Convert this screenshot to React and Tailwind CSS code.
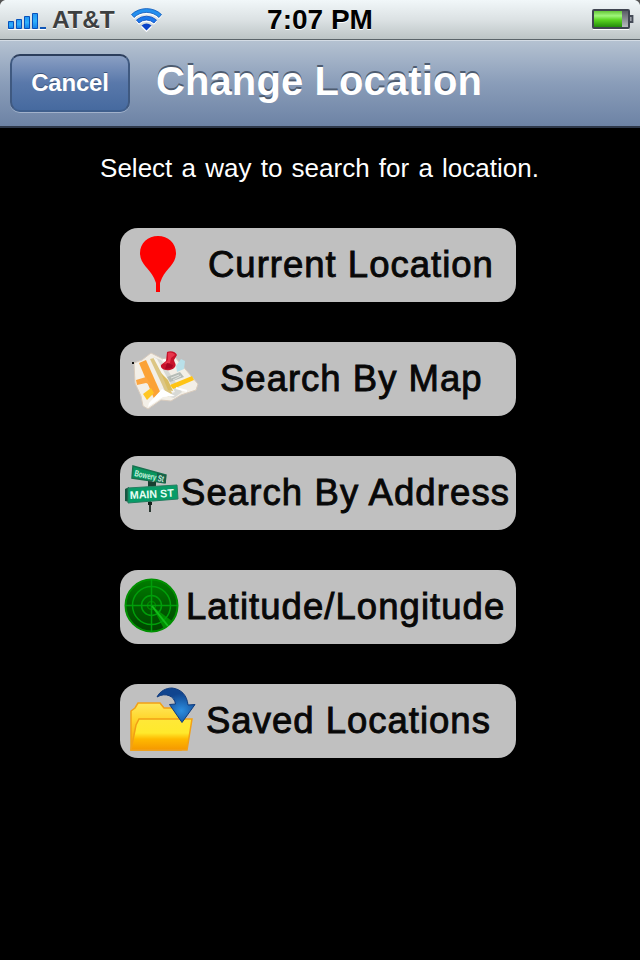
const options = [
  { label: "Current Location", Icon: PinIcon, text: "pl-[88px] tracking-[1px]" },
  { label: "Search By Map", Icon: MapIcon, text: "pl-[100px] tracking-[1px]" },
  { label: "Search By Address", Icon: SignIcon, text: "pl-[61px] tracking-[1.1px]" },
  { label: "Latitude/Longitude", Icon: RadarIcon, text: "pl-[66px] tracking-[1.05px]" },
  { label: "Saved Locations", Icon: FolderIcon, text: "pl-[86px] tracking-[1px]" },
];

function PinIcon() {
  return (
    <svg width="100" height="74" viewBox="0 0 100 74">
      <path
        d="M38 8c10 0 18 7 18 17 0 11-9 15-14 25l-2 5v9h-4v-9l-2-5C29 40 20 36 20 25 20 15 28 8 38 8z"
        fill="#fe0000"
      />
    </svg>
  );
}

function MapIcon() {
  return (
    <svg width="100" height="74" viewBox="0 0 100 74">
      <path
        d="M14 21l8-3 9-7 12 6 11-3 24 28-2 6-15 5-10 6-10-1-13 9-5-3-2-10-6-13z"
        fill="#f3efe7"
        stroke="#d8cbbd"
      />
      <path d="M33 15l8 3 21 32-8 6-8-2z" fill="#d8d9d5" />
      <path d="M19 21l7-3 16 36-7 5z" fill="#fba235" />
      <path d="M16 38l10-3 5 8-5-2-9 2z" fill="#fda640" />
      <path d="M23 52l8-6 3 5-7 7z" fill="#ffc623" />
      <path d="M30 17l4-1 19 34-5 5z" fill="#dcc684" />
      <path d="M33 15l4 2 18 33-3 1z" fill="#f7f5ef" />
      <path d="M41 31l7 7 5 11-5-1z" fill="#d9bc61" />
      <path d="M50 43l22-9 2 4-21 9z" fill="#ffc414" />
      <path d="M47 35l13-5 4 5-14 5z" fill="#b6bcb6" />
      <path d="M51 36l8-3M53 38l8-4" stroke="#e3e4e0" />
      <path d="M56 24l5-7 4 2-1 8-7 3z" fill="#b9e0e9" />
      <path d="M29 61l13-14 13 7-12 1-15 10z" fill="#fff" />
      <path d="M56 46l11 3M43 18l12 2" stroke="#fff" strokeWidth="2" />
      <path d="M47 10c4-2 9 0 10 3l-3 5 1 3c2 3-1 6-5 7-6 1-10-2-9-5l5-4z" fill="#c8132b" />
      <path d="M48 11c3-1 6 0 7 2l-4 3-1 5-6 1 4-4z" fill="#e8354b" />
      <path d="M47 21l6 2-1 3-7 1z" fill="#a80521" />
      <path d="M12 20h2v2h-2z" fill="#111" />
    </svg>
  );
}

function SignIcon() {
  return (
    <svg width="100" height="74" viewBox="0 0 100 74">
      <path d="M29 44h2v12h-2z" fill="#29352f" />
      <path d="M28 46h4v3h-4z" fill="#17211c" />
      <path d="M13 10l33 9-1 8-33-5z" fill="#07955e" stroke="#17724f" strokeWidth="1.5" />
      <path d="M37 17l9 2v8l-9-1z" fill="#185f49" />
      <text
        x="14"
        y="20"
        transform="rotate(12 14 20)"
        className="font-['Liberation_Sans'] text-[9px] font-bold"
        textLength="30"
        lengthAdjust="spacingAndGlyphs"
        fill="#c5f0df"
      >
        Bowery St
      </text>
      <path d="M28 25l8 1v4l-8 1z" fill="#183e31" />
      <path d="M5 33l4-2v15l-4-1z" fill="#185541" />
      <path d="M8 32l49-3 1 14-50 4z" fill="#079c68" stroke="#257e60" />
      <text
        x="10"
        y="43"
        transform="rotate(-3 10 43)"
        className="font-['Liberation_Sans'] text-[11px] font-bold"
        textLength="44"
        lengthAdjust="spacingAndGlyphs"
        fill="#e8fff5"
      >
        MAIN ST
      </text>
    </svg>
  );
}

function RadarIcon() {
  return (
    <svg width="100" height="74" viewBox="0 0 100 74">
      <defs>
        <linearGradient id="radar" x2="0" y2="1">
          <stop stopColor="#007d00" />
          <stop offset=".5" stopColor="#005c00" />
          <stop offset="1" stopColor="#004600" />
        </linearGradient>
      </defs>
      <circle cx="31.5" cy="35.5" r="26" fill="url(#radar)" stroke="#009000" strokeWidth="2" />
      <path d="M32 36l20 15-8 8z" fill="#008e00" />
      <g fill="none" stroke="#009e0a" strokeWidth="1.5">
        <circle cx="31.5" cy="35.5" r="19" />
        <circle cx="31.5" cy="35.5" r="10" />
        <circle cx="31.5" cy="35.5" r="4" stroke="#008800" />
        <path d="M31.5 9v53M5 35.5h53" />
      </g>
      <path d="M32 36l16 20" stroke="#13bd19" strokeWidth="2" />
    </svg>
  );
}

function FolderIcon() {
  return (
    <svg width="100" height="74" viewBox="0 0 100 74">
      <defs>
        <linearGradient id="folderBack" x2="0" y2="1">
          <stop stopColor="#ffe95c" />
          <stop offset=".35" stopColor="#ffd52b" />
          <stop offset="1" stopColor="#f59b00" />
        </linearGradient>
        <linearGradient id="folderFront" x2="0" y2="1">
          <stop stopColor="#ffe838" />
          <stop offset=".45" stopColor="#ffe92c" />
          <stop offset=".65" stopColor="#ffb900" />
          <stop offset="1" stopColor="#f59800" />
        </linearGradient>
        <radialGradient id="arrow" cx=".64" cy=".66" r=".5">
          <stop stopColor="#2c8ee0" />
          <stop offset="1" stopColor="#10458f" />
        </radialGradient>
      </defs>
      <path
        d="M11 66V27l4-3 3-5h22l4 5h13l4 7v35z"
        fill="url(#folderBack)"
        stroke="#f2a016"
        strokeWidth="1.5"
      />
      <path
        d="M11 66l5-25 3-6h53l-5 31z"
        fill="url(#folderFront)"
        stroke="#f2a016"
        strokeWidth="1.5"
      />
      <path
        d="M37 13C40 7 46 4 52 4c9 1 15 7 16 17l7-.5L62 38.500 49.500 20.500l6-.5c-1-8-10-12-18.500-7z"
        fill="url(#arrow)"
        stroke="#113c7e"
      />
    </svg>
  );
}

function StatusBar() {
  return (
    <div className="grid h-[39px] grid-cols-3 items-center bg-linear-to-b from-[#f1f7f9] via-[#dce2e4] to-[#bdc5c6]">
      <div className="flex items-center">
        <svg width="52" height="39" viewBox="0 0 52 39">
          <defs>
            <linearGradient id="signal" x2="0" y2="1">
              <stop stopColor="#2396f2" />
              <stop offset=".5" stopColor="#30b0fc" />
              <stop offset="1" stopColor="#137fe6" />
            </linearGradient>
          </defs>
          <path d="M0 0h5Q1 1 0 5z" fill="#555" />
          <path d="M8 29.500h38" stroke="#fff" />
          <g fill="url(#signal)" stroke="#0751bb">
            <path d="M8.500 21.500h5v7h-5z" />
            <path d="M16.500 19.500h5v9h-5z" />
            <path d="M24.500 16.500h5v12h-5z" />
            <path d="M32.500 13.500h5v15h-5z" />
          </g>
          <path d="M40 27h6v2h-6z" fill="#1057b7" />
        </svg>
        <span className="text-[24.500px] leading-[39px] font-bold text-[#3d3f40] [text-shadow:0_1px_0_#fff] tracking-[-0.3px]">
          AT&amp;T
        </span>
        <svg width="34" height="26" viewBox="0 0 34 26" className="-mt-px ml-[15.500px]">
          <g transform="translate(0 1.2)" fill="#fff">
            <path d="M1 8.500a22.500 22.500 0 0 1 31 0l-3 3.500a18 18 0 0 0-25 0z" />
            <path d="M6 14a15.500 15.500 0 0 1 21 0l-3 3.500a11 11 0 0 0-15 0z" />
            <path d="M11 19.500a8.500 8.500 0 0 1 11 0L16.500 25z" />
          </g>
          <path d="M1.500 8.500a22 22 0 0 1 30 0l-2.500 3a18 18 0 0 0-25 0z" fill="#2490ef" stroke="#1259b8" strokeWidth=".8" />
          <path d="M6.500 14a15 15 0 0 1 20 0L24 17a11 11 0 0 0-15 0z" fill="#1b78ea" stroke="#0d4cc0" strokeWidth=".8" />
          <path d="M11.500 19.500a8 8 0 0 1 10 0l-5 5z" fill="#0b42c8" />
        </svg>
      </div>
      <div className="text-center text-[28px] leading-[38px] font-bold text-black [text-shadow:0_1px_0_#fff]">
        7:07 PM
      </div>
      <div className="flex justify-end">
        <svg width="50" height="39" viewBox="0 0 50 39">
          <defs>
            <linearGradient id="charge" x2="0" y2="1">
              <stop stopColor="#65c738" />
              <stop offset=".3" stopColor="#a0f57b" />
              <stop offset=".55" stopColor="#5bd622" />
              <stop offset="1" stopColor="#238b0b" />
            </linearGradient>
            <linearGradient id="empty" x2="0" y2="1">
              <stop stopColor="#54585f" />
              <stop offset="1" stopColor="#bdc0c4" />
            </linearGradient>
          </defs>
          <path d="M45 0h5v5Q49 1 45 0z" fill="#555" />
          <path d="M3 29.500h36" stroke="#fff" />
          <rect x="3" y="10" width="36" height="18" rx="1" fill="url(#empty)" stroke="#3f4450" strokeWidth="2" />
          <path d="M4 11h28v16H4z" fill="url(#charge)" />
          <path d="M40 16h2.500v6H40" fill="#9a9fa7" stroke="#454b57" strokeWidth="1.800" />
        </svg>
      </div>
    </div>
  );
}

export default function App() {
  return (
    <main className="h-[960px] w-[640px] overflow-hidden bg-black font-['Liberation_Sans',Arial,sans-serif]">
      <StatusBar />
      <header className="flex h-[89px] items-center border-t border-b-2 border-t-[#5c656a] border-b-[#2d3748] bg-linear-to-b from-[#b6c3d2] via-[#8a9db9] to-[#6d83a5] pl-2.5 shadow-[inset_0_1px_0_#d4dce5]">
        <button className="h-[58px] w-[120px] rounded-[10px] border-2 border-t-[#2c3e5c] border-x-[#3f5980] border-b-[#3f5f8d] bg-linear-to-b from-[#8a9fc3] via-[#5978aa] via-50% to-[#466a9f] text-[24px] tracking-[-0.2px] font-bold text-white shadow-[0_1px_0_#a2b2cb] [text-shadow:0_-1.500px_0_#3c5377]">
          Cancel
        </button>
        <h1 className="-mt-[5px] ml-[26px] text-[40px] leading-none font-bold tracking-[0.1px] text-white [text-shadow:0_-2px_0_#4e5c70]">
          Change Location
        </h1>
      </header>
      <p className="pt-[25px] pr-px text-center text-[26px] leading-[30px] text-white [word-spacing:2px]">
        Select a way to search for a location.
      </p>
      <div className="mt-[45px] ml-[120px] flex w-[396px] flex-col gap-10">
        {options.map(({ label, Icon, text }) => (
          <button
            key={label}
            className="relative h-[74px] overflow-hidden rounded-[18px] bg-[#c0c0c0] text-left text-[36.5px] leading-[74px] whitespace-nowrap text-[#080808] [-webkit-text-stroke:0.9px_#080808]"
          >
            <span className="absolute top-0 left-0 [-webkit-text-stroke:0]">
              <Icon />
            </span>
            <span className={`relative block ${text}`}>{label}</span>
          </button>
        ))}
      </div>
    </main>
  );
}
